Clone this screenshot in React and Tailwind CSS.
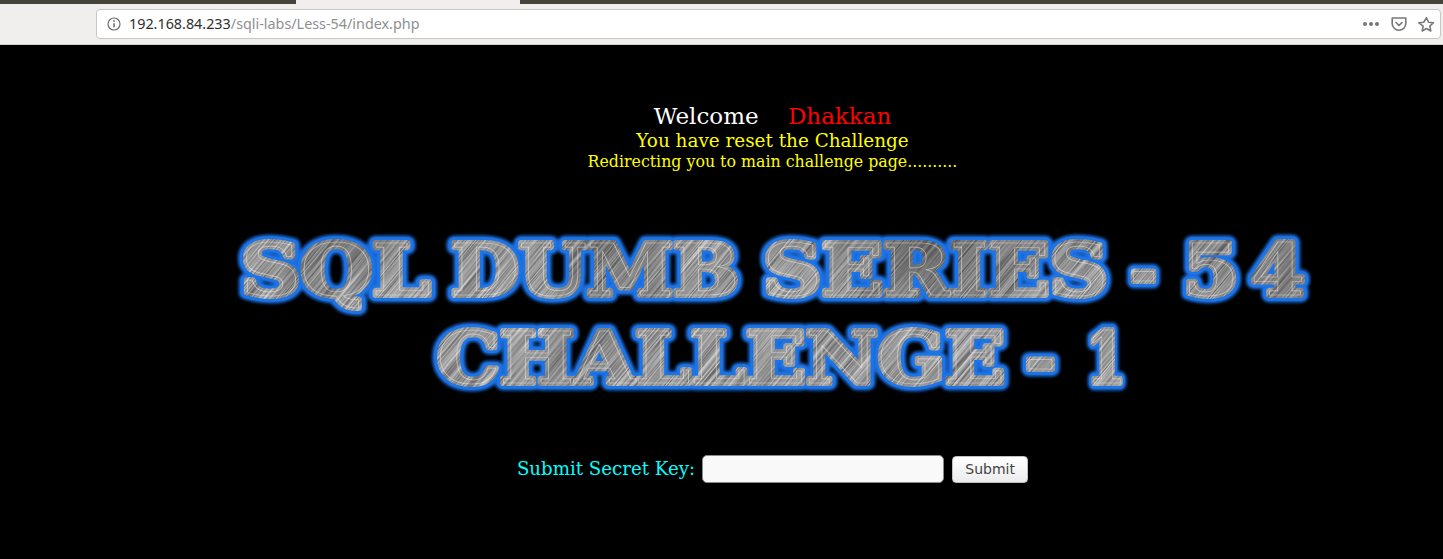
const serif = '"DejaVu Serif", serif';

const words = [
  { t: 'SQL', a: 240, b: 429, y: 66 },
  { t: 'DUMB', a: 450, b: 738, y: 66 },
  { t: 'SERIES', a: 762, b: 1107, y: 66 },
  { t: '-', a: 1129, b: 1156, y: 66 },
  { t: '5', a: 1182, b: 1238, y: 66 },
  { t: '4', a: 1250, b: 1304, y: 66 },
  { t: 'CHALLENGE', a: 436, b: 1004, y: 154 },
  { t: '-', a: 1024, b: 1055, y: 154 },
  { t: '1', a: 1085, b: 1125, y: 154 },
];

function Layer(props) {
  return words.map((w, i) => (
    <text
      key={i}
      x={w.a - 239}
      y={w.y}
      textLength={w.b - w.a}
      lengthAdjust="spacingAndGlyphs"
      fontFamily='"DejaVu Serif", serif'
      fontWeight="700"
      fontSize="71"
      strokeLinejoin="round"
      {...props}
    >
      {w.t}
    </text>
  ));
}

function Title() {
  return (
    <svg width="1090" height="170" viewBox="-12 0 1090 170" className="block" role="img" aria-label="SQL DUMB SERIES - 54 CHALLENGE - 1">
      <defs>
        <filter id="metal" x="0" y="0" width="100%" height="100%" colorInterpolationFilters="sRGB">
          <feTurbulence type="fractalNoise" baseFrequency="0.012 0.9" numOctaves="2" seed="4" result="fine" />
          <feColorMatrix in="fine" type="matrix" values="0.75 0 0 0 0.23  0.75 0 0 0 0.23  0.75 0 0 0 0.23  0 0 0 0 1" result="fineGrey" />
          <feTurbulence type="fractalNoise" baseFrequency="0.005 0.01" numOctaves="1" seed="9" result="wide" />
          <feColorMatrix in="wide" type="matrix" values="0.9 0 0 0 0.55  0.9 0 0 0 0.55  0.9 0 0 0 0.55  0 0 0 0 1" result="wideGrey" />
          <feComposite in="fineGrey" in2="wideGrey" operator="arithmetic" k1="1" k2="0" k3="0" k4="0" />
        </filter>
        <mask id="letters" maskUnits="userSpaceOnUse" x="-12" y="0" width="1090" height="170">
          <Layer fill="#fff" stroke="#fff" strokeWidth="6" />
        </mask>
        <filter id="glow" x="-20%" y="-30%" width="140%" height="160%">
          <feGaussianBlur stdDeviation="1.8" />
        </filter>
      </defs>
      <g filter="url(#glow)">
        <Layer fill="#1a6ad8" stroke="#1a6ad8" strokeWidth="15" />
      </g>
      <Layer fill="#1b74e8" stroke="#1b74e8" strokeWidth="11.5" />
      <g mask="url(#letters)">
        <rect x="-12" y="0" width="1090" height="170" fill="#939393" />
        <g transform="rotate(-50 540 85)">
          <rect x="-300" y="-600" width="1700" height="1400" filter="url(#metal)" />
        </g>
      </g>
      <Layer fill="none" stroke="#f4f4f4" strokeWidth="0.7" strokeOpacity="0.55" />
    </svg>
  );
}

export default function App() {
  return (
    <div className="w-[1443px] h-[559px] overflow-hidden bg-black flex flex-col">
      <div className="h-[45px] shrink-0 bg-[#f0efed] border-b border-[#cfcfcd] flex flex-col">
        <div className="h-[4px] flex shrink-0">
          <div className="w-[296px] bg-[#45433c]" />
          <div className="w-[224px] bg-[#f0efed]" />
          <div className="flex-1 bg-[#45433c]" />
        </div>
        <div className="flex pl-[96px] pr-[2px] pt-[5px]">
          <div className="flex-1 h-[30px] bg-white border border-[#c6c6c4] rounded-[4px] flex items-center pl-[9px] pr-[5px]" style={{ fontFamily: '"Noto Sans", sans-serif' }}>
            <svg width="16" height="16" viewBox="0 0 16 16" fill="none" stroke="#6e6e6e" strokeWidth="1.2">
              <circle cx="8" cy="8" r="6" />
              <path d="M8 7.2v4" strokeWidth="1.6" />
              <circle cx="8" cy="5" r="0.9" fill="#6e6e6e" stroke="none" />
            </svg>
            <span className="ml-[7px] text-[14.35px] text-[#2e2e2e]">192.168.84.233<span className="text-[#8f8f8f]">/sqli-labs/Less-54/index.php</span></span>
            <div className="ml-auto flex items-center">
              <div className="flex gap-[2px]">
                <span className="w-[4px] h-[4px] rounded-full bg-[#777]" />
                <span className="w-[4px] h-[4px] rounded-full bg-[#777]" />
                <span className="w-[4px] h-[4px] rounded-full bg-[#777]" />
              </div>
              <svg className="ml-[12px]" width="16" height="16" viewBox="0 0 16 16" fill="none" stroke="#777" strokeWidth="1.6">
                <path d="M1.2 2h13.6v5.5a6.8 6.8 0 0 1-13.6 0z" strokeLinejoin="round" />
                <path d="M5 6.5l3 3 3-3" strokeLinecap="round" strokeLinejoin="round" />
              </svg>
              <svg className="ml-[11px]" width="17" height="17" viewBox="0 0 24 24" fill="none" stroke="#777" strokeWidth="2.2" strokeLinejoin="round">
                <path d="M12 2.5l2.9 6.3 6.9.8-5.1 4.7 1.4 6.8-6.1-3.4-6.1 3.4 1.4-6.8L1.2 9.6l6.9-.8z" />
              </svg>
            </div>
          </div>
        </div>
      </div>
      <div className="flex-1 flex flex-col items-center pl-[102px] text-center" style={{ fontFamily: serif }}>
        <div className="mt-[58px] h-[26px] text-[23px] leading-[27px] text-white whitespace-pre">Welcome{'\u00a0\u00a0\u00a0\u00a0'}<span className="text-[#ff0000]">Dhakkan</span></div>
        <div className="h-[23px] text-[18.4px] leading-[23px] text-[#ffff00]">You have reset the Challenge</div>
        <div className="h-[20px] text-[15.8px] leading-[20px] text-[#ffff00]">Redirecting you to main challenge page..........</div>
        <div className="mt-[57px]"><Title /></div>
        <div className="mt-[56px] flex items-center">
          <span className="text-[18.2px] text-[#00ffff]">Submit Secret Key:</span>
          <div className="ml-[7px] w-[242px] h-[28px] bg-[#f9f9f9] border border-[#8a8a8a] rounded-[5px]" />
          <div className="ml-[8px] w-[76px] h-[27px] bg-gradient-to-b from-white to-[#ececec] border border-[#c0c0c0] rounded-[4px] flex items-center justify-center text-[14px] text-[#444]" style={{ fontFamily: '"DejaVu Sans", sans-serif' }}>Submit</div>
        </div>
      </div>
    </div>
  );
}
